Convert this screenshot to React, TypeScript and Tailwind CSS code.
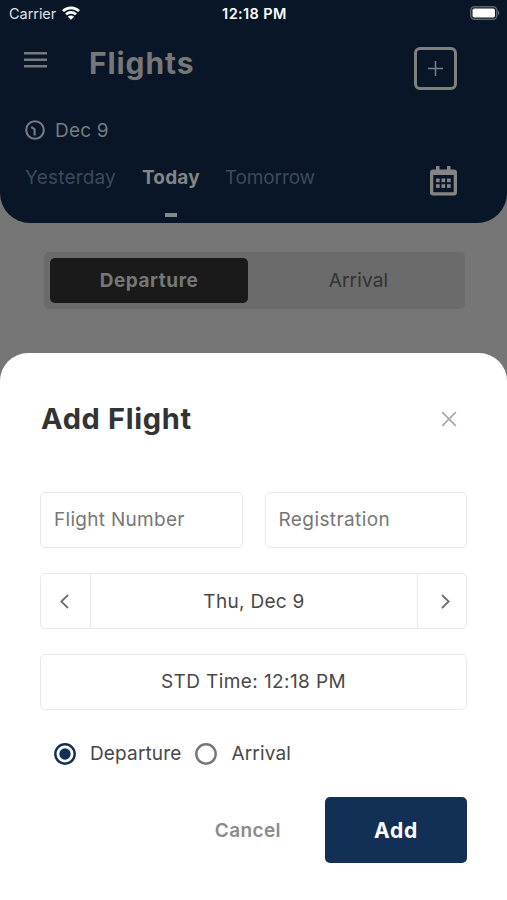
import { useState } from "react"
import clsx from "clsx"

type Direction = "departure" | "arrival"

const DAY_TABS = ["Yesterday", "Today", "Tomorrow"]

function StatusBar() {
  return (
    <div className="grid h-7 grid-cols-3 items-center pl-[9px] pr-[7px] text-white">
      <div className="flex items-center gap-[6px]">
        <span className="text-[14.5px] tracking-[-0.05px] text-[#dfe2e6]">Carrier</span>
        <svg className="-mt-[2px]" width="18" height="14" viewBox="0 0 18 14" fill="none" stroke="currentColor" strokeWidth="2.7">
          <path d="M1 5.1a11.3 11.3 0 0 1 16 0" />
          <path d="M4 8.4a7.1 7.1 0 0 1 10 0" />
          <path d="M9 13.8 5.9 10.7a4.4 4.4 0 0 1 6.2 0z" fill="currentColor" stroke="none" />
        </svg>
      </div>
      <span className="whitespace-nowrap text-center text-[14.5px] font-semibold tracking-[0.4px]">12:18 PM</span>
      <svg className="-mt-[2px] justify-self-end" width="30" height="14" viewBox="0 0 30 14">
        <rect x="0.75" y="0.75" width="26" height="12.5" rx="3.5" fill="none" stroke="#5b626e" strokeWidth="1.5" />
        <rect x="2.5" y="2.5" width="22.5" height="9" rx="1.8" fill="white" />
        <path d="M28 4.8c1.6.6 1.6 3.8 0 4.4z" fill="#6d7480" />
      </svg>
    </div>
  )
}

function CalendarIcon() {
  return (
    <svg className="mt-px" width="27" height="30" viewBox="0 0 27 30" fill="#858585">
      <path
        fillRule="evenodd"
        d="M6 0h3.5v3.5h7.500V0h3.500v3.500H24a3 3 0 0 1 3 3V26.500a3 3 0 0 1-3 3H3a3 3 0 0 1-3-3V6.500a3 3 0 0 1 3-3h3zM3.300 9v17.200h20.400V9z"
      />
      {[6, 11.5, 17].map((x) => (
        <g key={x}>
          <rect x={x} y="12.5" width="3.7" height="3.7" />
          <rect x={x} y="18.2" width="3.7" height="3.7" />
        </g>
      ))}
    </svg>
  )
}

function Header() {
  return (
    <header className="h-[223px] rounded-b-[30px] bg-[#081628] text-[#808080]">
      <StatusBar />
      <div className="mt-[19px] flex h-[43px] items-start pl-6 pr-[50px]">
        <svg className="mt-[5px]" width="23" height="16" viewBox="0 0 23 16" fill="#76797d">
          <path d="M0 0h23v2.5H0zM0 6.5h23V9H0zM0 13h23v2.5H0z" />
        </svg>
        <h1 className="ml-[42px] flex-1 text-[30px] font-bold leading-[33px] tracking-[0.9px] text-[#777777]">
          Flights
        </h1>
        <button className="flex size-[43px] items-center justify-center rounded-[6px] border-3 border-[#808080]">
          <svg width="15" height="15" viewBox="0 0 15 15" stroke="#7d8183" strokeWidth="1.5">
            <path d="M7.5 0v15M0 7.5h15" />
          </svg>
        </button>
      </div>
      <div className="mt-[28px] flex h-6 items-center gap-[10px] pl-[25px] text-[#777b80]">
        <svg width="20" height="20" viewBox="0 0 20 20" fill="none" stroke="currentColor" strokeWidth="2.1">
          <circle cx="10" cy="10" r="8.8" />
          <path d="M6.2 7 9.6 9.200v6.300" />
        </svg>
        <span className="pt-0.5 text-[19px] tracking-[0.2px]">Dec 9</span>
      </div>
      <div className="mt-[23px] flex items-start pl-[25px] pr-[50px]">
        <nav className="flex flex-1 gap-[26px] pt-px text-[19px] leading-6">
          {DAY_TABS.map((day) => (
            <div
              key={day}
              className={clsx(
                "flex flex-col items-center",
                day === "Today" && "font-bold tracking-[0.15px] text-[#858585]",
                day === "Yesterday" && "tracking-[0.2px] text-[#3e4a59]",
                day === "Tomorrow" && "-ml-px tracking-[-0.1px] text-[#3e4a59]"
              )}
            >
              {day}
              {day === "Today" ? <span className="mt-[23px] h-1 w-3 bg-[#85878d]" /> : null}
            </div>
          ))}
        </nav>
        <CalendarIcon />
      </div>
    </header>
  )
}

function DirectionSwitch() {
  return (
    <div className="ml-[44px] mr-[42px] mt-[29px] flex h-[57px] rounded-[5px] bg-[#6b6b6b] p-[6px] text-[19px]">
      <div className="flex h-[45px] w-[198px] items-center justify-center rounded-[5px] bg-[#1a1a1a] pt-0.5 font-bold tracking-[0.55px] text-[#777777]">
        Departure
      </div>
      <div className="flex flex-1 items-center justify-center pl-[10px] pt-0.5 tracking-[0.15px] text-[#333333]">Arrival</div>
    </div>
  )
}

type RadioProps = {
  label: string
  checked: boolean
  onSelect: () => void
}

function Radio({ label, checked, onSelect }: RadioProps) {
  return (
    <button type="button" role="radio" aria-checked={checked} onClick={onSelect} className="flex items-center gap-[14px]">
      <svg width="22" height="22" viewBox="0 0 22 22" fill="none" stroke={checked ? "#122f56" : "#757575"} strokeWidth="2.4">
        <circle cx="11" cy="11" r="9.7" />
        {checked ? <circle cx="11" cy="11" r="5.7" fill="#122f56" stroke="none" /> : null}
      </svg>
      <span className="pt-px tracking-[0.15px]">{label}</span>
    </button>
  )
}

function AddFlightSheet() {
  const [direction, setDirection] = useState<Direction>("departure")

  return (
    <section className="mt-[44px] flex-1 rounded-t-[28px] bg-white px-10 pt-[46px] text-[19px] text-[#484848]">
      <div className="flex h-10 items-center justify-between pl-px pr-[10px]">
        <h2 className="text-[29px] font-bold tracking-[0.65px] text-[#333333]">Add Flight</h2>
        <svg width="16" height="16" viewBox="0 0 16 16" stroke="#aaaaaa" strokeWidth="1.7">
          <path d="M1.2 1.2l13.6 13.6M14.8 1.2 1.2 14.8" />
        </svg>
      </div>

      <div className="mt-[53px] grid grid-cols-2 gap-[22px]">
        <input
          placeholder="Flight Number"
          className="h-14 w-full rounded-[5px] border border-[#e9e9e9] px-[13px] pb-px tracking-[0.3px] placeholder:text-[#777777]"
        />
        <input
          placeholder="Registration"
          className="h-14 w-full rounded-[5px] border border-[#e9e9e9] px-[13px] pb-px tracking-[0.4px] placeholder:text-[#777777]"
        />
      </div>

      <div className="mt-[25px] flex h-14 items-stretch rounded-[5px] border border-[#e9e9e9]">
        <button className="flex w-[50px] items-center justify-center border-r border-[#e9e9e9] pr-[2px]">
          <svg width="9" height="15" viewBox="0 0 9 15" fill="none" stroke="#707070" strokeWidth="1.8">
            <path d="M8 1 1.3 7.5 8 14" />
          </svg>
        </button>
        <div className="flex flex-1 items-center justify-center pt-0.5 tracking-[0.3px]">Thu, Dec 9</div>
        <button className="flex w-[49px] items-center justify-center border-l border-[#e9e9e9] pl-[7px]">
          <svg width="9" height="15" viewBox="0 0 9 15" fill="none" stroke="#707070" strokeWidth="1.8">
            <path d="M1 1l6.7 6.5L1 14" />
          </svg>
        </button>
      </div>

      <div className="mt-[25px] flex h-14 items-center justify-center rounded-[5px] border border-[#e9e9e9] pt-px tracking-[0.4px]">
        STD Time: 12:18 PM
      </div>

      <div role="radiogroup" className="mt-[32px] flex h-6 items-center gap-[14px] pl-[14px]">
        <Radio label="Departure" checked={direction === "departure"} onSelect={() => setDirection("departure")} />
        <Radio label="Arrival" checked={direction === "arrival"} onSelect={() => setDirection("arrival")} />
      </div>

      <div className="mt-[31px] flex items-center justify-end gap-11">
        <button className="pt-0.5 font-semibold tracking-[0.4px] text-[#8b8b8b]">Cancel</button>
        <button className="h-[66px] w-[142px] rounded-[5px] bg-[#122f56] pt-0.5 text-[21px] font-bold tracking-[0.7px] text-white">
          Add
        </button>
      </div>
    </section>
  )
}

export default function App() {
  return (
    <div className="flex h-[900px] w-[507px] flex-col overflow-hidden bg-[#767676] font-['Inter',sans-serif]">
      <Header />
      <DirectionSwitch />
      <AddFlightSheet />
    </div>
  )
}
